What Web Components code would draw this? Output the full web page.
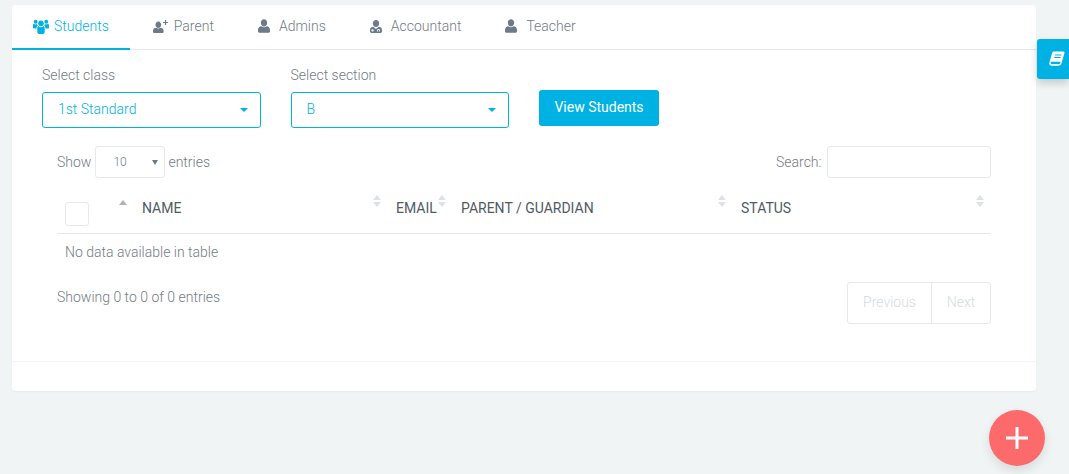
<!DOCTYPE html>
<html>
<head>
<meta charset="utf-8">
<title>Students</title>
<style>
  html, body { height: 100%; }
  body {
    margin: 0;
    background: #f0f4f5;
    font: 300 14px Roboto, "Liberation Sans", sans-serif;
    color: #737b84;
    overflow: hidden;
  }
  main { padding: 5px 33px 0 12px; }
</style>
</head>
<body>
<main>
  <app-card>
    <tab-bar>
      <tab-item icon="users" active>Students</tab-item>
      <tab-item icon="user-plus">Parent</tab-item>
      <tab-item icon="user">Admins</tab-item>
      <tab-item icon="user-md">Accountant</tab-item>
      <tab-item icon="user">Teacher</tab-item>
    </tab-bar>
    <filter-form>
      <select-box label="Select class">1st Standard</select-box>
      <select-box label="Select section">B</select-box>
      <primary-button slot="action">View Students</primary-button>
    </filter-form>
    <student-table></student-table>
  </app-card>
</main>
<side-tab></side-tab>
<fab-button></fab-button>

<script>
const ICONS = {
  user: '<svg viewBox="0 0 14 16" width="12" height="14"><path d="M7 0c2.200 0 3.700 1.900 3.700 4.200S9.200 8.500 7 8.500 3.300 6.500 3.300 4.200 4.800 0 7 0zM4.100 8.300C5 9 6 9.400 7 9.400s2-.4 2.900-1.100C12.300 8.600 14 10 14 12.600v1.600c0 1-.8 1.800-1.800 1.800H1.800C.8 16 0 15.200 0 14.200v-1.600C0 10 1.700 8.600 4.100 8.300z"/></svg>',
  users: '<svg viewBox="0 0 16 14" width="16" height="15" preserveAspectRatio="none"><circle cx="8" cy="4" r="2.700"/><circle cx="2.700" cy="2.500" r="1.900"/><circle cx="13.300" cy="2.500" r="1.900"/><path d="M4.300 8.400C4.300 7.300 5 6.800 5.800 6.800c.6.500 1.400.8 2.200.8s1.600-.3 2.200-.8c.8 0 1.500.5 1.500 1.600v3.800c0 1-.7 1.800-1.700 1.800H6c-1 0-1.700-.8-1.700-1.800z"/><path d="M3.600 8.800H.9C.4 8.800 0 8.400 0 7.900V6c0-.9.500-1.500 1.200-1.500.4.400 1 .6 1.500.6.500 0 .9-.1 1.300-.4.200.5.400 1 .7 1.400-.7.500-1.100 1.400-1.100 2.700zM12.400 8.800h2.700c.5 0 .9-.4.900-.9V6c0-.9-.5-1.500-1.200-1.500-.4.400-1 .6-1.500.6-.5 0-.9-.1-1.300-.4-.2.500-.4 1-.7 1.400.7.500 1.100 1.400 1.100 2.700z"/></svg>',
  'user-plus': '<svg viewBox="0 0 15 13" width="15" height="13"><path d="M5.300 1.500c1.700 0 2.800 1.500 2.800 3.200S7 7.900 5.300 7.900 2.500 6.400 2.500 4.700 3.600 1.500 5.300 1.500zM3 7.700c.7.500 1.400.8 2.300.8s1.600-.3 2.300-.8c1.900.2 3 1.400 3 3.100v.9c0 .7-.6 1.300-1.300 1.300H1.300C.6 13 0 12.400 0 11.700v-.9c0-1.700 1.100-2.900 3-3.100z"/><path d="M11.900 0h1.200v1.900H15v1.200h-1.900V5h-1.200V3.100H10V1.900h1.900z"/></svg>',
  'user-md': '<svg viewBox="0 0 14 16" width="12" height="13" preserveAspectRatio="none"><path d="M7 0c2.200 0 3.700 1.900 3.700 4.200S9.200 8.500 7 8.500 3.300 6.500 3.300 4.200 4.800 0 7 0z"/><path fill-rule="evenodd" d="M3.800 8.300 7 11l3.200-2.700c2.400.3 3.800 1.800 3.800 4.300v1.600c0 1-.8 1.800-1.800 1.800H1.800C.8 16 0 15.200 0 14.200v-1.600c0-2.500 1.400-4 3.800-4.300zM3 11.500a1.300 1.300 0 1 0 0 2.600 1.300 1.300 0 0 0 0-2.600zm7-.5c-1 0-1.700.8-1.700 1.800v1.200h1v-1.200c0-.4.300-.8.700-.8s.7.400.7.800v1.200h1v-1.200c0-1-.7-1.800-1.700-1.800z"/></svg>',
  book: '<svg viewBox="0 0 16 16" width="16" height="16"><path fill-rule="evenodd" d="M5 .5h9.300c1 0 1.400.8 1.100 1.700l-3 10.300c-.4 1.300-1.400 2.200-2.800 2.200H2.500C1 14.700 0 13.500.3 12.100L3 2.200C3.300 1.200 4 .5 5 .5zm1 3-.3 1h6.600l.3-1zm-.7 2.400-.3 1h6.600l.3-1zM2.700 10.800c-.7 0-1 .5-1 1.200 0 .6.400 1 1 1h7.200c.7 0 1-.2 1.300-1l.4-1.200z"/></svg>'
};

class AppCard extends HTMLElement {
  constructor() {
    super();
    this.attachShadow({mode: 'open'}).innerHTML = `
      <style>
        :host { display: block; height: 386px; background: #fff; border-radius: 4px; box-shadow: 0 1px 2px rgba(0,0,0,.04); }
        .foot { margin-top: 37px; height: 29px; border-top: 1px solid #f2f4f5; }
      </style>
      <slot></slot>
      <div class="foot"></div>`;
  }
}
customElements.define('app-card', AppCard);

class TabBar extends HTMLElement {
  constructor() {
    super();
    this.attachShadow({mode: 'open'}).innerHTML = `
      <style>
        :host { display: flex; gap: 2px; height: 44px; border-bottom: 1px solid #e6e9ec; }
      </style>
      <slot></slot>`;
  }
}
customElements.define('tab-bar', TabBar);

class TabItem extends HTMLElement {
  constructor() {
    super();
    let icon = ICONS[this.getAttribute('icon')];
    this.attachShadow({mode: 'open'}).innerHTML = `
      <style>
        :host { display: flex; align-items: center; gap: 5px; padding: 0 21px 1px; height: 42px; border-bottom: 2px solid transparent; }
        :host([active]) { color: #00b2e3; border-bottom-color: #00b2e3; }
        .ic { display: flex; width: 16px; fill: #6c7a89; }
        :host([active]) .ic { fill: #00b2e3; }
      </style>
      <span class="ic">${icon}</span><slot></slot>`;
  }
}
customElements.define('tab-item', TabItem);

class FilterForm extends HTMLElement {
  constructor() {
    super();
    this.attachShadow({mode: 'open'}).innerHTML = `
      <style>
        :host { display: flex; gap: 30px; align-items: flex-start; padding: 17px 0 0 30px; }
        .act { padding-top: 23px; }
      </style>
      <slot></slot>
      <div class="act"><slot name="action"></slot></div>`;
  }
}
customElements.define('filter-form', FilterForm);

class SelectBox extends HTMLElement {
  constructor() {
    super();
    this.attachShadow({mode: 'open'}).innerHTML = `
      <style>
        :host { display: block; width: 218.5px; }
        label { display: block; height: 25px; line-height: 16px; }
        .box {
          display: flex; align-items: center; justify-content: space-between;
          height: 36px; box-sizing: border-box; padding: 0 12px 2px 15px;
          border: 1px solid #00b2e3; border-radius: 3px; color: #00b2e3;
        }
        i { width: 0; height: 0; margin-top: 2px; border: 4.500px solid transparent; border-top-color: #00b2e3; border-bottom: 0; }
      </style>
      <label>${this.getAttribute('label')}</label>
      <div class="box"><span><slot></slot></span><i></i></div>`;
  }
}
customElements.define('select-box', SelectBox);

class PrimaryButton extends HTMLElement {
  constructor() {
    super();
    this.attachShadow({mode: 'open'}).innerHTML = `
      <style>
        :host { display: block; width: 120px; height: 36px; line-height: 35px; text-align: center; color: #fff; font-weight: 400; background: #00b2e3; border-radius: 3px; }
      </style>
      <slot></slot>`;
  }
}
customElements.define('primary-button', PrimaryButton);

class SortArrows extends HTMLElement {
  constructor() {
    super();
    let only = this.hasAttribute('up');
    this.attachShadow({mode: 'open'}).innerHTML = `
      <style>
        :host { display: flex; flex-direction: column; gap: 2px; width: 8px; }
        i { width: 0; height: 0; border: 4px solid transparent; }
        .u { border-top: 0; border-bottom: 5px solid #dfe2e5; }
        .d { border-bottom: 0; border-top: 5px solid #dfe2e5; }
        :host([up]) .u { border-bottom-color: #adb4ba; }
      </style>
      <i class="u"></i>${only ? '' : '<i class="d"></i>'}`;
  }
}
customElements.define('sort-arrows', SortArrows);

class StudentTable extends HTMLElement {
  constructor() {
    super();
    let head = [['', 77, true], ['NAME', 254], ['EMAIL', 65], ['PARENT / GUARDIAN', 280], ['STATUS', 258]];
    let cols = head.map(h => `<col style="width:${h[1]}px">`).join('');
    let ths = head.map((h, i) => `
      <th>
        ${i === 0 ? '<span class="check"></span>' : h[0]}
        <sort-arrows ${h[2] ? 'up' : ''}></sort-arrows>
      </th>`).join('');
    this.attachShadow({mode: 'open'}).innerHTML = `
      <style>
        :host { display: block; padding: 18px 45px 0; }
        .top, .bottom { display: flex; justify-content: space-between; }
        .top { align-items: center; height: 32px; }
        .group { display: flex; align-items: center; gap: 4px; }
        .len {
          display: flex; align-items: center; justify-content: space-between;
          width: 70px; height: 32px; box-sizing: border-box; padding: 0 6px 0 17px;
          margin-right: -1px; font-size: 12px;
          border: 1px solid #e6e9ec; border-radius: 3px;
        }
        .len i { width: 0; height: 0; border: 3px solid transparent; border-top: 5px solid #6c7a89; border-bottom: 0; }
        .search { width: 164px; height: 32px; box-sizing: border-box; border: 1px solid #e6e9ec; border-radius: 3px; margin-left: 1.500px; }
        table { width: 934px; table-layout: fixed; border-collapse: collapse; margin-top: 8px; }
        th { position: relative; height: 47px; padding: 0 8px 2px; box-sizing: border-box; text-align: left; font-weight: 400; color: #505a64; border-bottom: 1px solid #e3e9ea; vertical-align: middle; white-space: nowrap; }
        th sort-arrows { position: absolute; right: 7px; top: 9px; }
        th:first-child sort-arrows { top: 14px; }
        .check { display: block; width: 24px; height: 24px; margin-top: 11px; box-sizing: border-box; border: 1px solid #e6e9ec; border-radius: 3px; }
        td { height: 38px; padding: 0 8px 1px; box-sizing: border-box; }
        .bottom { align-items: flex-start; margin-top: 11px; }
        .info { padding-top: 7px; }
        .pager { display: flex; width: 144px; height: 42px; box-sizing: border-box; border: 1px solid #e6e9ec; border-radius: 3px; color: #d5dbe0; line-height: 39px; }
        .pager span { text-align: center; }
        .pager span:first-child { width: 83px; }
        .pager span + span { flex: 1; border-left: 1px solid #e6e9ec; }
      </style>
      <div class="top">
        <div class="group">Show <span class="len">10<i></i></span> entries</div>
        <div class="group">Search: <span class="search"></span></div>
      </div>
      <table>
        <colgroup>${cols}</colgroup>
        <thead><tr>${ths}</tr></thead>
        <tbody><tr><td colspan="5">No data available in table</td></tr></tbody>
      </table>
      <div class="bottom">
        <div class="info">Showing 0 to 0 of 0 entries</div>
        <div class="pager"><span>Previous</span><span>Next</span></div>
      </div>`;
  }
}
customElements.define('student-table', StudentTable);

class SideTab extends HTMLElement {
  constructor() {
    super();
    this.attachShadow({mode: 'open'}).innerHTML = `
      <style>
        :host {
          position: fixed; right: 0; top: 39px; width: 32px; height: 40px;
          display: flex; align-items: center; box-sizing: border-box; padding-left: 12px;
          background: #00b2e3; border-radius: 3px 0 0 3px; fill: #fff;
          box-shadow: 0 4px 8px rgba(0,0,0,.18);
        }
      </style>
      ${ICONS.book}`;
  }
}
customElements.define('side-tab', SideTab);

class FabButton extends HTMLElement {
  constructor() {
    super();
    this.attachShadow({mode: 'open'}).innerHTML = `
      <style>
        :host {
          position: fixed; left: 989px; top: 410px; width: 56px; height: 56px;
          display: flex; align-items: center; justify-content: center;
          background: #fc6a6c; border-radius: 50%;
          box-shadow: 0 5px 11px rgba(0,0,0,.1);
        }
      </style>
      <svg width="22" height="22" viewBox="0 0 22 22"><path fill="#fff" d="M9.500 0h3v9.500H22v3h-9.500V22h-3v-9.500H0v-3h9.500z"/></svg>`;
  }
}
customElements.define('fab-button', FabButton);
</script>
</body>
</html>
